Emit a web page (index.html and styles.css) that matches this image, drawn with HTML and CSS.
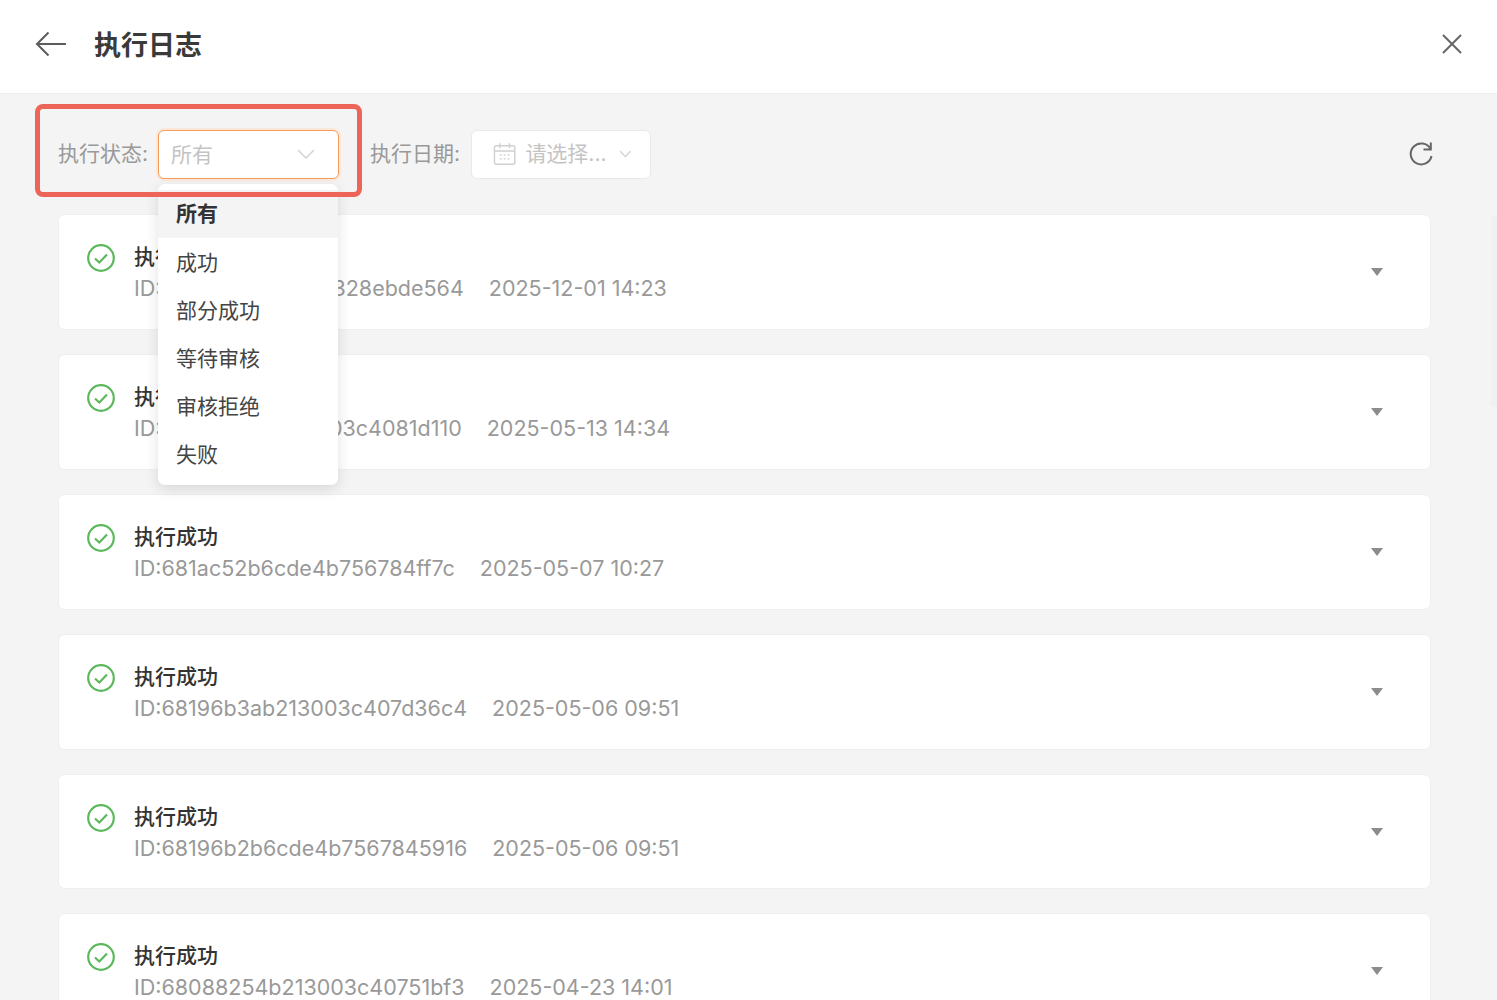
FILE: index.html
```html
<!DOCTYPE html>
<html lang="zh-CN">
<head>
<meta charset="utf-8">
<title>执行日志</title>
<link rel="stylesheet" href="styles.css">
</head>
<body>
<div class="page">
  <header class="header">
    <svg class="back" width="32" height="26" viewBox="0 0 32 26" fill="none" stroke="#5c5c5c" stroke-width="2"><path d="M31 13H2M13.5 1.5 2 13l11.500 11.500"/></svg>
    <h1 class="title">执行日志</h1>
    <svg class="close" width="20" height="20" viewBox="0 0 20 20" fill="none" stroke="#666" stroke-width="2"><path d="M1 1l18 18M19 1 1 19"/></svg>
  </header>
  <main class="main">
    <div class="toolbar">
      <span class="label">执行状态:</span>
      <div class="select select-active">
        <span class="select-text">所有</span>
        <svg width="18" height="10" viewBox="0 0 18 10" fill="none" stroke="#d4d4d4" stroke-width="1.6"><path d="M1 1l8 8 8-8"/></svg>
      </div>
      <span class="label label-date">执行日期:</span>
      <div class="select select-date">
        <svg width="24" height="24" viewBox="0 0 24 24" fill="none" stroke="#d0d0d0" stroke-width="1.5"><rect x="1.500" y="3.500" width="21" height="19" rx="2"/><path d="M1.500 9h21M7 1v5M17 1v5"/><path d="M7 13h2M11 13h2M15 13h2M7 17h2M11 17h2M15 17h2" stroke-width="1.300"/></svg>
        <span class="date-text">请选择...</span>
        <svg width="13" height="8" viewBox="0 0 13 8" fill="none" stroke="#d4d4d4" stroke-width="1.4"><path d="M1 1l5.500 5.500L12 1"/></svg>
      </div>
      <svg class="refresh" width="24" height="26" viewBox="0 0 24 26" fill="none" stroke="#666" stroke-width="2"><path d="M21.500 8A10.500 10.500 0 1 0 22.500 15"/><path d="M21.800 1.500V8.500H14.500"/></svg>
    </div>
    <div class="list">
      <article class="card">
        <svg class="ok" width="28" height="28" viewBox="0 0 28 28" fill="none" stroke="#5cb85c" stroke-width="2.200"><circle cx="14" cy="14" r="12.800"/><path d="M8 14.500l4.300 4L20 10.500"/></svg>
        <div class="info"><div class="name">执行成功</div><div class="meta"><span>ID:6826d1b3abf7a5328ebde564</span><span>2025-12-01 14:23</span></div></div>
        <span class="caret"></span>
      </article>
      <article class="card">
        <svg class="ok" width="28" height="28" viewBox="0 0 28 28" fill="none" stroke="#5cb85c" stroke-width="2.200"><circle cx="14" cy="14" r="12.800"/><path d="M8 14.500l4.300 4L20 10.500"/></svg>
        <div class="info"><div class="name">执行成功</div><div class="meta"><span>ID:6822e4b2b213003c4081d110</span><span>2025-05-13 14:34</span></div></div>
        <span class="caret"></span>
      </article>
      <article class="card">
        <svg class="ok" width="28" height="28" viewBox="0 0 28 28" fill="none" stroke="#5cb85c" stroke-width="2.200"><circle cx="14" cy="14" r="12.800"/><path d="M8 14.500l4.300 4L20 10.500"/></svg>
        <div class="info"><div class="name">执行成功</div><div class="meta"><span>ID:681ac52b6cde4b756784ff7c</span><span>2025-05-07 10:27</span></div></div>
        <span class="caret"></span>
      </article>
      <article class="card">
        <svg class="ok" width="28" height="28" viewBox="0 0 28 28" fill="none" stroke="#5cb85c" stroke-width="2.200"><circle cx="14" cy="14" r="12.800"/><path d="M8 14.500l4.300 4L20 10.500"/></svg>
        <div class="info"><div class="name">执行成功</div><div class="meta"><span>ID:68196b3ab213003c407d36c4</span><span>2025-05-06 09:51</span></div></div>
        <span class="caret"></span>
      </article>
      <article class="card">
        <svg class="ok" width="28" height="28" viewBox="0 0 28 28" fill="none" stroke="#5cb85c" stroke-width="2.200"><circle cx="14" cy="14" r="12.800"/><path d="M8 14.500l4.300 4L20 10.500"/></svg>
        <div class="info"><div class="name">执行成功</div><div class="meta"><span>ID:68196b2b6cde4b7567845916</span><span>2025-05-06 09:51</span></div></div>
        <span class="caret"></span>
      </article>
      <article class="card">
        <svg class="ok" width="28" height="28" viewBox="0 0 28 28" fill="none" stroke="#5cb85c" stroke-width="2.200"><circle cx="14" cy="14" r="12.800"/><path d="M8 14.500l4.300 4L20 10.500"/></svg>
        <div class="info"><div class="name">执行成功</div><div class="meta"><span>ID:68088254b213003c40751bf3</span><span>2025-04-23 14:01</span></div></div>
        <span class="caret"></span>
      </article>
    </div>
  </main>
  <div class="menu">
    <div class="menu-item menu-item-active">所有</div>
    <div class="menu-item">成功</div>
    <div class="menu-item">部分成功</div>
    <div class="menu-item">等待审核</div>
    <div class="menu-item">审核拒绝</div>
    <div class="menu-item">失败</div>
  </div>
  <div class="scroll-thumb"></div>
  <div class="highlight"></div>
</div>
</body>
</html>
```

FILE: styles.css
```css
* { box-sizing: border-box; }
html, body { margin: 0; height: 100%; overflow: hidden; }
body {
  font-family: Inter, "Noto Sans CJK SC", sans-serif;
  background: #f4f4f4;
  color: #333;
}
.page { position: relative; height: 1000px; overflow: hidden; }
.header {
  height: 94px;
  background: #fff;
  border-bottom: 1px solid #efefef;
  display: flex;
  align-items: center;
  padding: 0 35px 4px 35px;
}
.back { flex: none; margin-bottom: 2px; }
.title { margin: 2px 0 0 27px; font-size: 27px; font-weight: 700; line-height: 36px; color: #3a3a3a; flex: 1; }
.close { flex: none; margin-bottom: 2px; }
.main { padding: 35px 66px 0 58px; }
.toolbar { display: flex; align-items: center; height: 50px; }
.label { font-size: 21px; color: #999; line-height: 30px; white-space: nowrap; }
.select {
  height: 49px;
  background: #fff;
  border: 1px solid #e9e9e9;
  border-radius: 6px;
  display: flex;
  align-items: center;
}
.select-active {
  width: 181px;
  margin-left: 10px;
  padding: 0 23px 0 12px;
  border-color: #f49c5a;
  box-shadow: 0 0 0 2px #fbe8da;
  justify-content: space-between;
}
.select-text { font-size: 21px; color: #c4c4c4; padding-bottom: 2px; }
.label-date { margin-left: 31px; }
.select-date { width: 180px; margin-left: 11px; padding: 0 19px 0 21px; }
.date-text { font-size: 21px; color: #c4c4c4; margin: 0 12px 0 9px; padding-bottom: 4px; white-space: nowrap; }
.refresh { margin-left: auto; margin-right: -2px; flex: none; }
.list { display: flex; flex-direction: column; gap: 24px; margin-top: 35px; }
.card {
  height: 115.900px;
  flex: none;
  background: #fff;
  border: 1px solid #efefef;
  border-radius: 7px;
  display: flex;
  align-items: flex-start;
  padding: 28px 47px 0 28px;
}
.ok { flex: none; margin-top: 1px; margin-left: -0.500px; }
.info { margin-left: 19.500px; flex: 1; margin-top: -1px; }
.name { font-size: 21px; font-weight: 500; line-height: 30px; color: #333; }
.meta {
  font-size: 21.500px;
  line-height: 32px;
  color: #999;
  display: flex;
  gap: 25px;
  white-space: nowrap;
}
.caret {
  flex: none;
  margin-top: 25px;
  width: 0;
  height: 0;
  border-left: 6px solid transparent;
  border-right: 6px solid transparent;
  border-top: 8px solid #8c8c8c;
}
.menu {
  position: absolute;
  left: 158px;
  top: 184px;
  width: 180px;
  height: 301px;
  background: #fff;
  border-radius: 7px;
  box-shadow: 0 4px 14px rgba(0, 0, 0, 0.12);
  padding-top: 6px;
}
.menu-item { height: 48px; padding-left: 18px; font-size: 21px; line-height: 47px; color: #444; }
.menu-item-active { background: #f4f4f4; font-weight: 700; color: #333; margin-bottom: 1px; }
.scroll-thumb {
  position: absolute;
  right: 0;
  top: 215px;
  width: 6px;
  height: 192px;
  background: #f0f0f0;
  border-radius: 3px 0 0 3px;
}
.highlight {
  position: absolute;
  left: 35px;
  top: 104px;
  width: 327px;
  height: 93px;
  border: 5px solid #ec6558;
  border-radius: 8px;
  pointer-events: none;
}
```
